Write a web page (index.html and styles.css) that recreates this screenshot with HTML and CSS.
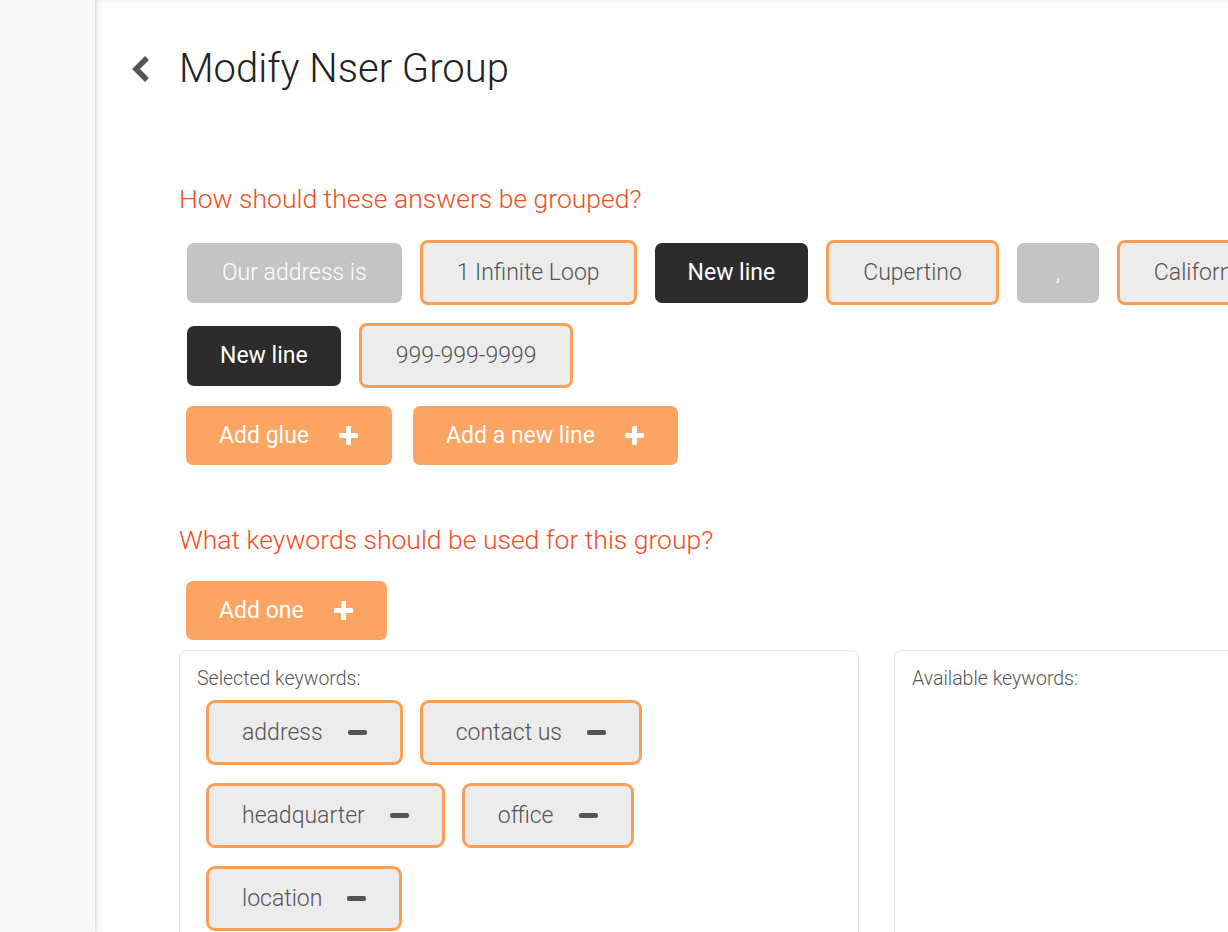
FILE: index.html
```html
<!DOCTYPE html>
<html lang="en">
<head>
<meta charset="utf-8">
<title>Modify Nser Group</title>
<link rel="stylesheet" href="styles.css">
</head>
<body>
<div class="app">
  <aside class="sidebar"></aside>
  <main class="main">
    <header class="header">
      <svg class="back" width="20" height="28" viewBox="0 0 20 28"><path d="M16 3 L5 14 L16 25" fill="none" stroke="#555" stroke-width="5.5" stroke-linejoin="miter"/></svg>
      <h1 class="title">Modify Nser Group</h1>
    </header>

    <h2 class="question q1">How should these answers be grouped?</h2>
    <div class="tokens">
      <span class="token glue">Our address is</span>
      <span class="token field">1 Infinite Loop</span>
      <span class="token newline">New line</span>
      <span class="token field">Cupertino</span>
      <span class="token glue comma">,</span>
      <span class="token field">California</span>
      <span class="token newline">New line</span>
      <span class="token field">999-999-9999</span>
    </div>
    <div class="actions">
      <button class="btn">Add glue <svg class="plus" width="19" height="19" viewBox="0 0 19 19"><rect x="7" y="0" width="5" height="19" rx="1" fill="#fff"/><rect x="0" y="7" width="19" height="5" rx="1" fill="#fff"/></svg></button>
      <button class="btn">Add a new line <svg class="plus" width="19" height="19" viewBox="0 0 19 19"><rect x="7" y="0" width="5" height="19" rx="1" fill="#fff"/><rect x="0" y="7" width="19" height="5" rx="1" fill="#fff"/></svg></button>
    </div>

    <h2 class="question q2">What keywords should be used for this group?</h2>
    <div class="actions">
      <button class="btn">Add one <svg class="plus" width="19" height="19" viewBox="0 0 19 19"><rect x="7" y="0" width="5" height="19" rx="1" fill="#fff"/><rect x="0" y="7" width="19" height="5" rx="1" fill="#fff"/></svg></button>
    </div>

    <div class="panels">
      <section class="panel">
        <div class="panel-label">Selected keywords:</div>
        <div class="keywords">
          <span class="keyword">address <span class="minus"></span></span>
          <span class="keyword">contact us <span class="minus"></span></span>
          <span class="keyword">headquarter <span class="minus"></span></span>
          <span class="keyword">office <span class="minus"></span></span>
          <span class="keyword">location <span class="minus"></span></span>
        </div>
      </section>
      <section class="panel">
        <div class="panel-label">Available keywords:</div>
      </section>
    </div>
  </main>
</div>
</body>
</html>
```

FILE: styles.css
```css
html, body {
  margin: 0;
  padding: 0;
  overflow: hidden;
  background: #fff;
}
body {
  font-family: Roboto, "Liberation Sans", sans-serif;
  font-weight: 300;
  width: 1228px;
  height: 932px;
}
.app {
  display: flex;
  height: 932px;
}
.sidebar {
  flex: 0 0 95px;
  background: #f7f7f7;
  box-shadow: 1px 0 2px rgba(0,0,0,0.12), 3px 0 8px rgba(0,0,0,0.07);
  position: relative;
  z-index: 2;
}
.main {
  flex: 1 0 auto;
  padding: 46px 0 0 36px;
  box-shadow: inset 0 4px 5px -3px rgba(0,0,0,0.07);
}
.header {
  display: flex;
  align-items: center;
  gap: 28px;
  height: 46px;
}
.back {
  display: block;
  margin-top: -1px;
}
.title {
  margin: 0;
  font-size: 40px;
  line-height: 46px;
  font-weight: 300;
  color: #222;
}
.question {
  margin: 0 0 0 48px;
  font-size: 26.5px;
  line-height: 32px;
  font-weight: 300;
  color: #f04f24;
}
.q1 { margin-top: 91px; }
.q2 { margin-top: 59px; }
.tokens {
  display: flex;
  flex-wrap: wrap;
  align-items: center;
  gap: 18px 18px;
  margin: 25px 0 0 56px;
  width: 1200px;
}
.token {
  box-sizing: border-box;
  display: inline-flex;
  align-items: center;
  justify-content: center;
  height: 60px;
  padding: 0 33px;
  border-radius: 7px;
  font-size: 23px;
  white-space: nowrap;
}
.glue {
  background: #c4c4c4;
  color: #fff;
  padding: 0 35px;
}
.comma { min-width: 82px; }
.newline {
  background: #2c2c2c;
  color: #fff;
  font-weight: 400;
}
.field {
  height: 65px;
  padding: 0 34px;
  background: #ececec;
  border: 3px solid #fd9f52;
  border-radius: 8px;
  color: #555;
}
.actions {
  display: flex;
  gap: 21px;
  margin: 18px 0 0 55px;
}
.q2 + .actions { margin-top: 25px; }
.btn {
  display: inline-flex;
  align-items: center;
  gap: 30px;
  height: 59px;
  padding: 0 34px 0 33px;
  border: none;
  border-radius: 7px;
  background: #fca461;
  color: #fff;
  font-family: Roboto, "Liberation Sans", sans-serif;
  font-weight: 400;
  font-size: 23px;
}
.plus { display: block; }
.panels {
  display: grid;
  grid-template-columns: 680px 680px;
  gap: 35px;
  margin: 10px 0 0 48px;
  height: 400px;
}
.panel {
  box-sizing: border-box;
  border: 1px solid #e6e6e6;
  border-radius: 7px;
  padding: 17px 17px 0 17px;
}
.panel-label {
  font-size: 19.5px;
  line-height: 22px;
  color: #555;
}
.keywords {
  display: flex;
  flex-wrap: wrap;
  gap: 18px 17px;
  margin: 10px 0 0 9px;
  width: 460px;
}
.keyword {
  box-sizing: border-box;
  display: inline-flex;
  align-items: center;
  gap: 25px;
  height: 65px;
  padding: 0 33px 0 33px;
  background: #ececec;
  border: 3px solid #fd9f52;
  border-radius: 9px;
  color: #555;
  font-size: 23px;
  white-space: nowrap;
}
.minus {
  display: block;
  width: 19px;
  height: 5px;
  border-radius: 2px;
  background: #555;
}
```
